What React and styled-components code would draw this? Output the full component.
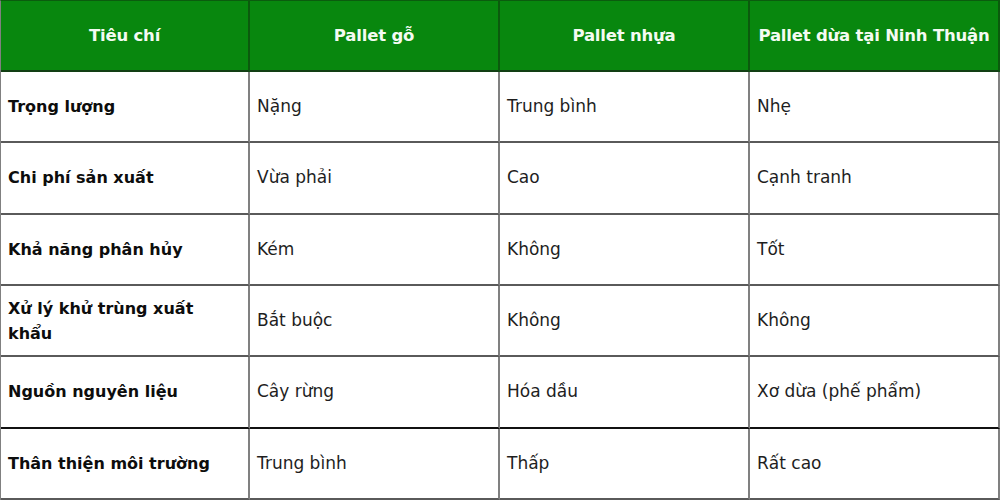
import styled, { createGlobalStyle } from 'styled-components';

const GlobalStyle = createGlobalStyle`
    html, body {
        margin: 0;
        padding: 0;
        background: #ffffff;
    }
    body {
        font-family: 'DejaVu Sans', 'Open Sans', sans-serif;
    }
`;

const rows = [
    ['Trọng lượng', 'Nặng', 'Trung bình', 'Nhẹ'],
    ['Chi phí sản xuất', 'Vừa phải', 'Cao', 'Cạnh tranh'],
    ['Khả năng phân hủy', 'Kém', 'Không', 'Tốt'],
    ['Xử lý khử trùng xuất khẩu', 'Bắt buộc', 'Không', 'Không'],
    ['Nguồn nguyên liệu', 'Cây rừng', 'Hóa dầu', 'Xơ dừa (phế phẩm)'],
    ['Thân thiện môi trường', 'Trung bình', 'Thấp', 'Rất cao'],
];

const headers = ['Tiêu chí', 'Pallet gỗ', 'Pallet nhựa', 'Pallet dừa tại Ninh Thuận'];

function App() {
    return (
        <>
            <GlobalStyle />
            <Table>
                {headers.map((h) => (
                    <HeadCell key={h}>{h}</HeadCell>
                ))}
                {rows.map((row, i) =>
                    row.map((text, j) => (
                        <Cell key={i + '-' + j} $label={j === 0} $dark={i === 4}>
                            {text}
                        </Cell>
                    ))
                )}
            </Table>
        </>
    );
}

export default App;

const Table = styled.div`
    display: grid;
    grid-template-columns: 249px 250px 250px 1fr;
    grid-template-rows: 71px repeat(6, 1fr);
    width: 1000px;
    height: 500px;
    box-sizing: border-box;
    border-left: 1px solid #808080;
    border-top: 1px solid #0b5c0e;
`;

const HeadCell = styled.div`
    display: flex;
    align-items: center;
    justify-content: center;
    text-align: center;
    padding: 0 4px;
    box-sizing: border-box;
    background: #08870e;
    color: #f4fbf2;
    font-weight: 700;
    font-size: 16.5px;
    letter-spacing: -0.2px;
    border-right: 2px solid #0b5a0d;
    border-bottom: 2px solid #123f14;
`;

const Cell = styled.div`
    display: flex;
    align-items: center;
    padding: 0 7px;
    box-sizing: border-box;
    background: #ffffff;
    color: ${(p) => (p.$label ? '#0d0d0d' : '#1e1e1e')};
    font-size: ${(p) => (p.$label ? '16px' : '17px')};
    font-weight: ${(p) => (p.$label ? 700 : 400)};
    line-height: 25px;
    border-right: 2px solid #808080;
    border-bottom: 2px solid ${(p) => (p.$dark ? '#111111' : '#5a5a5a')};
`;
